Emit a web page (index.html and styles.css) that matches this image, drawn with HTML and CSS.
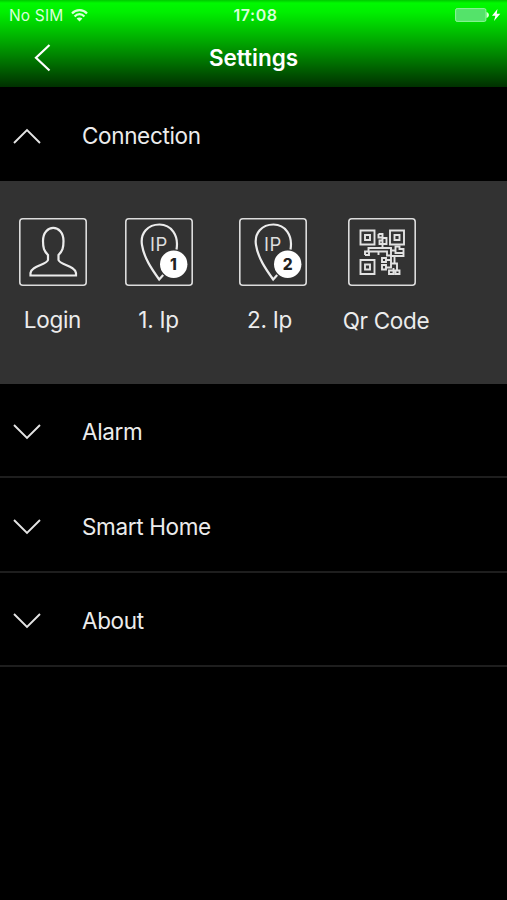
FILE: index.html
```html
<!DOCTYPE html>
<html lang="en">
<head>
    <meta charset="UTF-8">
    <meta name="viewport" content="width=device-width,initial-scale=1.0">
    <title>Settings</title>
    <link rel="stylesheet" href="styles.css">
</head>
<body>
<header class="header">
    <div class="status-bar">
        <div class="status-left">
            <span class="carrier">No SIM</span>
            <svg class="wifi" width="17" height="13" viewBox="0 0 17 13" fill="none" stroke="#d9ffd9" stroke-width="2.200">
                <path d="M1 4.500C5 0 12 0 16 4.500"/>
                <path d="M3.600 7.400c2.700-3 7.100-3 9.800 0"/>
                <path d="M8.500 12.500L5.600 9.500c1.600-1.500 4.200-1.500 5.800 0z" fill="#d9ffd9" stroke="none"/>
            </svg>
        </div>
        <span class="time">17:08</span>
        <div class="status-right">
            <svg width="46" height="14" viewBox="0 0 46 14">
                <rect x=".6" y=".6" width="30.300" height="12.800" rx="1.500" fill="#54e36a" stroke="#8df59a"/>
                <path d="M31.500 4c3.200.8 3.200 5.200 0 6z" fill="#d9ffd9"/>
                <path d="M42.500 1L37 7.800h3.400L39 13l6.300-7.200h-3.600z" fill="#fff"/>
            </svg>
        </div>
    </div>
    <div class="nav-bar">
        <svg class="back" width="18" height="28" viewBox="0 0 18 28" fill="none" stroke="#fff" stroke-width="2.200">
            <path d="M15.500 1L2 13.800l13.500 12.700"/>
        </svg>
        <h1 class="title">Settings</h1>
    </div>
</header>

<div class="row row-open">
    <svg class="arrow" width="28" height="16" viewBox="0 0 28 16"><path d="M1 15L14 2l13 13"/></svg>
    <span class="row-text">Connection</span>
</div>
<div class="panel">
    <div class="item">
        <svg class="icon" width="68" height="68" viewBox="0 0 68 68">
            <rect class="frame" x=".8" y=".8" width="66.400" height="66.400" rx="3"/>
            <path class="line" d="M11.500 57.500v-2.500C12.500 47.500 27.500 47 29 42v-5c-4-4-5-7-5-14C24 5.500 44.500 5.500 44.500 23c0 7-1 10-5 14v5c1.500 5 16.500 5.500 17.500 13v2.500z"/>
        </svg>
        <span class="label">Login</span>
    </div>
    <div class="item">
        <svg class="icon" width="68" height="68" viewBox="0 0 68 68">
            <rect class="frame" x=".8" y=".8" width="66.400" height="66.400" rx="3"/>
            <path class="line" d="M51.500 31.500C54 17 46 6.500 34.500 6.500S15 15 17 27c2 13 10 24.500 17.200 34.500l4-4.500"/>
            <text class="ip-text" x="25" y="32.500">IP</text>
            <circle cx="48.700" cy="46.300" r="13.700" fill="#fff"/>
            <text class="badge-text" x="48.300" y="52">1</text>
        </svg>
        <span class="label">1. Ip</span>
    </div>
    <div class="item">
        <svg class="icon" width="68" height="68" viewBox="0 0 68 68">
            <rect class="frame" x=".8" y=".8" width="66.400" height="66.400" rx="3"/>
            <path class="line" d="M51.500 31.500C54 17 46 6.500 34.500 6.500S15 15 17 27c2 13 10 24.500 17.200 34.500l4-4.500"/>
            <text class="ip-text" x="25" y="32.500">IP</text>
            <circle cx="48.700" cy="46.300" r="13.700" fill="#fff"/>
            <text class="badge-text" x="48.700" y="52">2</text>
        </svg>
        <span class="label second">2. Ip</span>
    </div>
    <div class="item item-qr">
        <svg class="icon" width="68" height="68" viewBox="0 0 68 68">
            <rect class="frame" x=".8" y=".8" width="66.400" height="66.400" rx="3"/>
            <g class="qr">
                <path d="M12.500 12.500h14v14h-14zM17 17h5v5h-5z"/>
                <path d="M42 12.500h14v14H42zM46.500 17h5v5h-5z"/>
                <path d="M12.500 42h14v14h-14zM17 46.500h5v5h-5z"/>
                <path d="M30.500 16h4v4h4v6h-7v-3.500h3.500M30.500 16v3.500h4V31"/>
                <path d="M17 37v-3.500h3.500V30H43v4M17 37h4v-3.500h9.500V37M30.500 33.500h8.500v4h4"/>
                <path d="M43 30v8h12.500v-7h-4v-2.500h-4v4h-3.500M47.500 32.500v2.500h8"/>
                <path d="M34 40h4v4h-4zM34 47h4v4.500h-4zM38 42h5v7.500h-5M43 38v12M43 45.500h6v7h2.500V56h-4v-3.500H41V56h4.500v-6M46.500 38v8"/>
            </g>
        </svg>
        <span class="label qr-label">Qr Code</span>
    </div>
</div>
<div class="row">
    <svg class="arrow" width="28" height="16" viewBox="0 0 28 16"><path d="M1 1l13 13L27 1"/></svg>
    <span class="row-text">Alarm</span>
</div>
<div class="row">
    <svg class="arrow" width="28" height="16" viewBox="0 0 28 16"><path d="M1 1l13 13L27 1"/></svg>
    <span class="row-text">Smart Home</span>
</div>
<div class="row">
    <svg class="arrow" width="28" height="16" viewBox="0 0 28 16"><path d="M1 1l13 13L27 1"/></svg>
    <span class="row-text">About</span>
</div>
</body>
</html>
```
FILE: styles.css
```css
*{
    margin: 0;
    padding: 0;
    box-sizing: border-box;
}
body{
    background: #000;
    color: #ececec;
    font-family: Inter, "Liberation Sans", sans-serif;
}
svg{
    display: block;
}

.header{
    height: 87px;
    background: linear-gradient(#00c800 0, #00fa00 3px, #00f000 12px, #00c400 30px, #008c00 52px, #003000 87px);
}
.status-bar{
    display: grid;
    grid-template-columns: 1fr auto 1fr;
    align-items: center;
    height: 30px;
    padding: 0 6px 0 9px;
    font-size: 15.500px;
    color: #d9ffd9;
}
.status-left{
    display: flex;
    align-items: center;
    gap: 8px;
}
.carrier{
    letter-spacing: .15px;
}
.time{
    padding-left: 1px;
    font-size: 16px;
    font-weight: 600;
    letter-spacing: .5px;
}
.status-right{
    justify-self: end;
}
.nav-bar{
    display: grid;
    grid-template-columns: 1fr auto 1fr;
    align-items: center;
    height: 56px;
    padding: 0 34px;
}
.title{
    font-size: 22.500px;
    line-height: 28px;
    font-weight: 600;
    color: #fff;
}

.row{
    display: flex;
    align-items: center;
    height: 94.400px;
    padding: 4px 0 0 13px;
    border-bottom: 2px solid #1e1e1e;
}
.row-open{
    height: 94px;
    padding-top: 3px;
    border-bottom: none;
}
.arrow{
    margin-right: 41px;
    fill: none;
    stroke: #e4e4e4;
    stroke-width: 1.900;
}
.row-text{
    font-size: 22.500px;
    line-height: 28px;
    letter-spacing: -.35px;
}

.panel{
    display: grid;
    grid-template-columns: 106px 106px 122px 104px;
    height: 203px;
    padding-top: 37px;
    background: #323232;
}
.item{
    display: flex;
    flex-direction: column;
    align-items: center;
}
.item-qr .icon{
    margin-right: 8px;
}
.label{
    margin-top: 20px;
    margin-right: 1px;
    font-size: 22.500px;
    line-height: 28px;
    letter-spacing: -.3px;
}
.second{
    margin-right: 7px;
}
.qr-label{
    margin-top: 21px;
    margin-right: 0;
}

.frame{
    fill: none;
    stroke: #dcdcdc;
    stroke-width: 1.600;
}
.line{
    fill: none;
    stroke: #ececec;
    stroke-width: 2.200;
}
.qr{
    fill: none;
    stroke: #e2e2e2;
    stroke-width: 1.900;
}
.ip-text{
    font-size: 18.500px;
    letter-spacing: .5px;
    fill: #dedede;
}
.badge-text{
    font-size: 15.500px;
    font-weight: 800;
    text-anchor: middle;
    fill: #222;
}
```
